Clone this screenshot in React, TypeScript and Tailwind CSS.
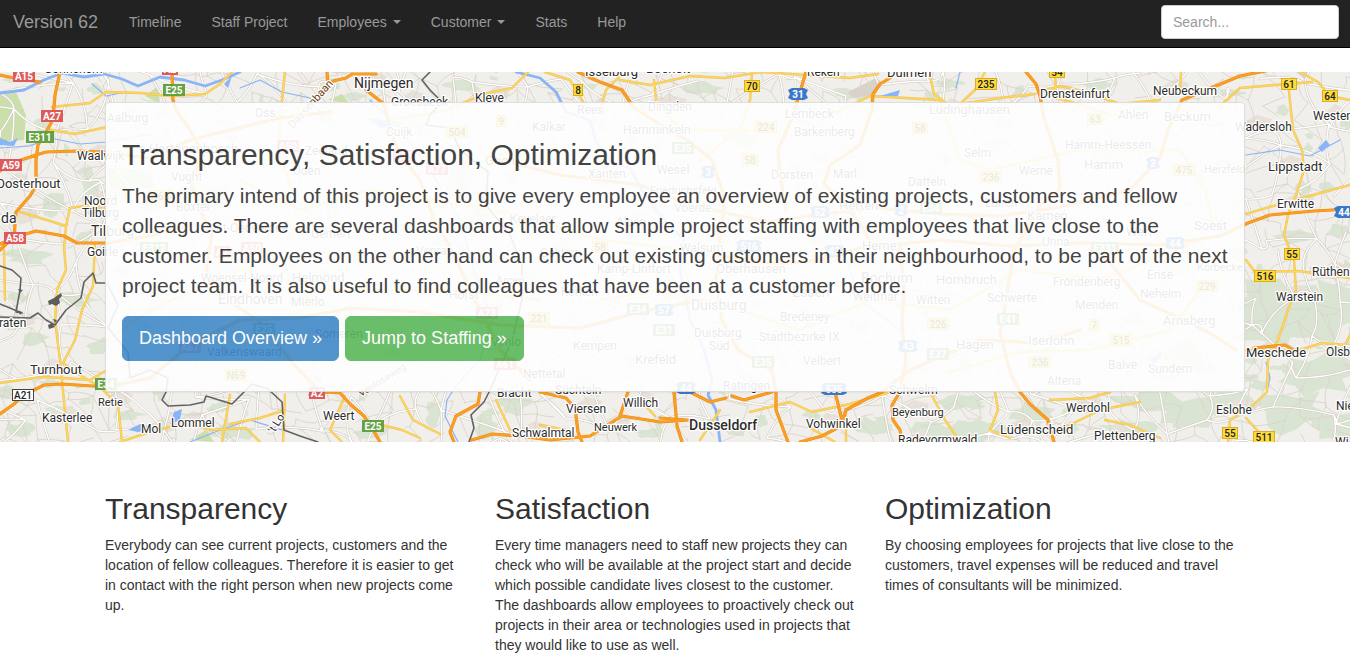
import React from "react";

type Point = [number, number];

/* ---------- map data ---------- */

const MAP = { left: 0, top: 72, width: 1350, height: 370 };

const motorways = [
  "M0 75 L14 78 L40 82",
  "M60 72 L55 95 L53 118 L50 125 L38 145 L36 160 L36 186 L30 196 L16 212 L14 237 L4 246 L0 250",
  "M0 171 L12 163 L36 155 L46 152 L77 151 L100 152 L150 158 L190 140 L230 130 L280 118 L330 112",
  "M0 244 L16 237 L36 231 L64 236 L77 243 L107 243 L150 236 L190 225",
  "M0 414 L14 404 L22 396 L44 385 L62 384 L92 386 L107 387 L150 378 L190 345 L240 320 L300 318 L350 308 L420 312 L500 325 L580 328 L640 312 L700 300",
  "M172 72 L173 100 L176 110 L190 130 L204 155 L190 180 L200 210 L212 235 L206 270 L228 300 L260 322 L290 360 L320 392",
  "M310 395 L328 392 L340 393 L350 404 L364 416 L372 428 L380 442",
  "M327 72 L328 86 L333 81 L346 78 L352 74 L376 74",
  "M366 90 L384 104 L390 130 L400 155 L420 180 L434 220 L452 250 L470 290 L485 320 L500 350 L530 380",
  "M578 72 L600 82 L622 90 L634 108 L660 124 L690 142 L712 160 L722 190 L724 210 L720 235 L716 280 L722 320 L738 350 L772 370 L776 392 L776 410 L788 442",
  "M806 72 L800 92 L792 118 L778 150 L780 175 L786 210",
  "M890 78 L880 84 L873 94 L872 110 L860 145 L830 165 L824 184 L850 210 L870 240",
  "M1026 72 L1036 84 L1040 96 L1044 118 L1058 160 L1060 190 L1040 205 L1014 250 L1006 300 L1000 332 L1010 372 L1020 392 L1030 404 L1048 420 L1054 442",
  "M1270 70 L1240 76 L1182 100 L1168 130 L1160 158 L1130 190 L1060 207 L1000 216 L940 214 L880 208 L820 214 L770 222 L740 216 L690 205 L640 185 L560 175 L500 160",
  "M1350 209 L1314 211 L1270 215 L1248 223 L1220 236 L1160 245 L1080 243 L1010 246 L940 240 L860 248 L820 260 L780 264 L720 256",
  "M900 246 L904 290 L902 325 L906 360 L900 392 L892 405 L893 420 L900 430 L902 442",
  "M1254 348 L1285 345 L1295 351 M1236 350 L1210 333 L1180 318 L1140 300 L1100 250",
  "M800 442 L822 436 L841 426 L846 410 L868 398 L882 392 L910 370 L980 340 L1040 343 L1080 330",
  "M835 392 L842 420",
  "M540 392 L566 398 L575 408 L578 432 L582 442",
  "M480 392 L478 404 L456 416 L450 432 L454 442 M472 440 L492 434 L520 436 L550 440 L590 436 L622 416 L660 422 L689 420",
  "M620 416 L628 392",
  "M660 418 L686 420 M674 392 L677 426 L682 442 M690 392 L710 402 L726 398 M732 396 L744 400 L772 392",
];

const mainRoads = [
  "M52 107 L90 103 L106 92 L140 93 L170 96 L205 94 L220 84 L232 72",
  "M50 130 L75 134 L107 127",
  "M20 212 L50 221 L66 226 L70 208 L90 205 L107 210",
  "M66 226 L64 248 L66 270 L57 290 L55 320 L60 360 L68 442",
  "M95 243 L93 286 L82 310 L75 340 L63 363 L80 375 L100 387 L118 405 L122 442",
  "M0 383 L42 377 L63 378 L90 380 L107 370",
  "M120 442 L150 432 L185 423 L212 430 L246 428 L260 442",
  "M4 250 L5 300 M230 395 L222 442",
  "M230 424 L260 418 L285 410 M345 396 L330 430 L342 442 M285 395 L283 442",
  "M400 396 L413 420 L440 434 M378 424 L402 430 L420 438",
  "M285 72 L282 100 L278 150 L292 190",
  "M390 120 L440 112 L470 100 L492 92 L512 88 L528 72",
  "M545 72 L570 80 L582 100 L595 120 M600 110 L606 90 L620 76",
  "M620 80 L650 85 L690 76 L725 78 L760 72 M752 72 L750 100 L740 130 L700 160",
  "M654 80 L656 100 L680 130 L750 130",
  "M930 76 L934 94 L950 106 M985 72 L975 90 L960 104 L1000 98 L1035 94 M1055 72 L1056 98 L1078 104 L1110 115",
  "M1040 92 L1060 86 L1086 92 L1120 104 L1160 100 M1181 72 L1180 92 M1220 106 L1240 88 L1275 85 L1312 82 M1300 72 L1318 82 L1330 96 L1350 100",
  "M1288 82 L1293 130 L1302 150 L1304 170 L1296 195 L1288 215 L1284 235 L1294 260 L1296 290 L1288 310 L1278 340 L1268 360 L1267 392 L1250 408 L1230 420 L1228 442",
  "M1246 214 L1280 204 L1350 185 M1246 260 L1255 272 L1298 271 L1350 278",
  "M1246 350 L1300 350 L1322 343 L1345 345 L1350 335 M1246 418 L1268 442",
  "M995 392 L998 410 L990 430 L1010 438 M1050 400 L1090 398 L1110 392 M1105 420 L1130 425 L1160 438 M1060 430 L1100 410 L1140 402",
  "M750 412 L790 402 L812 412 L850 404 L890 392 M810 428 L835 442 M846 442 L846 410 M930 392 L945 420 L960 442",
  "M496 400 L510 430 M540 425 L566 430 M640 400 L655 416 M700 440 L720 410 M760 72 L850 78 L878 74",
  "M240 180 L300 210 L370 190 L430 200 L520 215 L600 240 L690 250",
  "M600 300 L660 290 L740 310 L800 330 L870 300 L950 310 L1020 270 L1100 280 L1200 240",
  "M820 120 L870 96 L940 100 L960 160 L990 170 L1080 150 L1180 150 L1205 190 L1215 230",
  "M107 340 L150 310 L240 270 L330 290 L450 290 L540 300",
  "M950 372 L1020 352 L1090 350 L1170 330 L1200 290",
];

const rivers = [
  "M0 93 L24 90 L44 80 L62 73 L84 77 L104 74 L122 79 L138 86 L160 77 L184 80 L205 86 L222 80 L240 72",
  "M516 72 L540 78 L556 92 L566 112 L590 120 L596 142 L614 164 L630 168 L642 190 L660 215 L684 240 L680 270 L690 320 L704 350 L712 380 L708 395 L716 410 L720 442",
];

const streams = [
  "M0 148 L30 146 L50 138 L80 144 L107 142 L150 134",
  "M92 84 L106 96 L126 92",
  "M458 442 L445 416 L447 400 L456 386 L480 360 L492 320 L474 270 L460 220 L430 170 L400 128 L370 100",
  "M1266 362 L1270 378 L1267 390",
  "M1246 155 L1280 150 L1310 156 L1340 140",
  "M190 442 L220 430 L250 420 L282 430",
  "M960 72 L956 88 M830 190 L840 240 L860 300 L900 330",
  "M240 88 L260 80 L282 92 L310 98 L320 112",
];

const borders = [
  "M0 266 L12 270 L21 278 L20 290 L16 312 L22 313 L0 304 M0 317 L30 318 L38 313 L46 320 L55 325 L66 310 L81 298 L84 282 L93 273 L96 283 L107 283 L118 305 L108 328 L128 352 L130 378 L150 370 L168 378 L166 392 L162 400 L168 406 L190 405 L204 402 L206 396 L232 404 L252 384 L268 389 L282 402 L284 430 L300 436 L318 442",
  "M430 72 L422 80 L430 90 L442 102 L430 115 L426 125 L450 128 L460 150 L488 172 L486 205 L510 235 L522 265 L522 300 L512 340 L490 390 L484 402 L471 415 L474 428 L469 442",
];

const greens = [
  "M0 92 L16 92 L26 115 L24 140 L0 142 Z",
  "M190 440 L206 430 L214 442 Z",
  "M107 168 L150 170 L155 188 L110 190 Z",
  "M145 96 L158 86 L160 104 Z",
  "M328 100 L342 94 L350 104 Z",
];

const forests: [number, number, number, number][] = [
  [28, 258, 26, 9], [90, 190, 10, 22], [54, 205, 14, 12], [86, 236, 12, 8], [76, 300, 22, 8],
  [34, 340, 16, 7], [100, 346, 14, 9], [60, 410, 20, 6], [20, 430, 18, 7], [130, 415, 16, 6],
  [230, 432, 26, 9], [330, 84, 10, 8], [352, 96, 14, 6], [462, 86, 18, 6], [374, 432, 20, 8],
  [486, 424, 12, 14], [513, 404, 18, 10], [434, 414, 9, 13], [700, 88, 24, 7], [650, 108, 20, 6],
  [850, 94, 20, 7], [950, 84, 14, 6], [1020, 92, 10, 6], [1100, 84, 16, 6], [1230, 92, 16, 4],
  [1296, 236, 22, 8], [1340, 230, 12, 7], [1262, 304, 26, 30], [1304, 318, 54, 34], [1336, 302, 26, 26],
  [1268, 334, 34, 14], [1316, 374, 46, 20], [1290, 412, 44, 24], [1334, 426, 26, 18], [1226, 404, 28, 14],
  [1190, 414, 30, 18], [1150, 402, 38, 12], [1126, 430, 34, 12], [1032, 414, 26, 12], [974, 430, 30, 14],
  [962, 402, 26, 9], [870, 426, 24, 9], [930, 430, 22, 10], [736, 430, 12, 7], [650, 434, 18, 6],
  [200, 196, 40, 14], [458, 180, 14, 24], [480, 220, 18, 14], [740, 140, 20, 10], [1180, 360, 40, 20],
];

const lakes = [
  "M0 138 L10 142 L18 138 L14 146 L0 145 Z",
  "M1318 148 L1326 140 L1330 145 L1322 152 Z",
  "M1150 360 L1160 352 L1162 356 L1154 364 Z",
  "M174 412 L182 409 L180 420 L170 424 Z",
  "M224 84 L232 76 L228 88 Z",
  "M880 96 L900 90 L898 96 Z",
  "M128 430 L140 424 L156 428 L138 432 Z",
  "M368 118 L384 120 L396 126 L380 128 Z",
];

const places: [number, number, number, string][] = [
  [354, 88, 14, "Nijmegen"], [391, 106, 12, "Groesbeek"], [475, 102, 12, "Kleve"], [585, 76, 13, "Isselburg"],
  [646, 73, 13, "Bocholt"], [807, 76, 12, "Reken"], [887, 77, 13, "Dülmen"], [1040, 98, 12, "Drensteinfurt"],
  [1153, 95, 12, "Neubeckum"], [1313, 120, 12, "Westen"], [1235, 131, 12, "Wadersloh"], [1268, 171, 13, "Lippstadt"],
  [1277, 208, 12, "Erwitte"], [1312, 276, 12, "Rüthen"], [1276, 301, 12, "Warstein"], [1246, 357, 13, "Meschede"],
  [1326, 356, 12, "Olsb"], [1216, 414, 12, "Eslohe"], [1336, 410, 12, "Nie"], [1335, 446, 12, "Wi"],
  [1066, 412, 12, "Werdohl"], [1000, 434, 13, "Lüdenscheid"], [1094, 440, 12, "Plettenberg"], [892, 416, 11, "Beyenburg"],
  [898, 444, 12, "Radevormwald"], [806, 428, 12, "Vohwinkel"], [623, 407, 12, "Willich"], [566, 413, 12, "Viersen"],
  [594, 431, 11, "Neuwerk"], [512, 437, 12, "Schwalmtal"], [497, 397, 12, "Bracht"], [555, 394, 12, "Süchteln"],
  [889, 394, 12, "Schwelm"], [323, 420, 12, "Weert"], [171, 427, 12, "Lommel"], [141, 433, 12, "Mol"],
  [42, 422, 12, "Kasterlee"], [98, 406, 11, "Retie"], [30, 374, 13, "Turnhout"], [-1, 327, 12, "raten"],
  [87, 256, 12, "Goirle"], [91, 236, 14, "Tilburg"], [84, 205, 12, "Noord"], [82, 217, 12, "Tilburg"],
  [1, 223, 14, "da"], [-4, 188, 13, "Oosterhout"], [77, 160, 12, "Waalwijk"], [44, 73, 12, "Gorinchem"],
  [107, 122, 12, "Aalburg"], [137, 153, 13, "'s-Hertogenbosch"], [171, 181, 12, "Vught"], [176, 211, 12, "Boxtel"],
  [206, 232, 12, "Sint-Oedenrode"], [255, 117, 12, "Oss"], [305, 155, 12, "Zeeland"], [293, 175, 12, "Uden"],
  [386, 136, 12, "Cuijk"], [485, 165, 13, "Goch"], [532, 131, 12, "Kalkar"], [577, 114, 12, "Rees"],
  [648, 111, 12, "Dingden"], [623, 134, 12, "Hamminkeln"], [588, 178, 12, "Xanten"], [657, 174, 12, "Wesel"],
  [650, 194, 11, "Friedrichsfeld"], [674, 212, 12, "Voerde"], [510, 223, 12, "Kevelaer"], [616, 226, 12, "Alpen"],
  [311, 238, 12, "Gemert"], [416, 255, 12, "Venray"], [540, 257, 12, "Geldern"], [597, 273, 12, "Kamp-Lintfort"],
  [292, 282, 13, "Helmond"], [201, 282, 12, "Woensel-Noord"], [218, 304, 14, "Eindhoven"], [291, 306, 12, "Mierlo"],
  [496, 284, 11, "Arcen"], [449, 299, 12, "Horst"], [561, 296, 12, "Kerken"], [315, 338, 12, "Someren"],
  [207, 356, 12, "Valkenswaard"], [491, 346, 12, "Venlo"], [573, 350, 12, "Kempen"], [635, 364, 13, "Krefeld"],
  [523, 378, 12, "Nettetal"], [691, 310, 14, "Duisburg"], [694, 337, 12, "Duisburg"], [709, 350, 12, "Süd"],
  [723, 390, 12, "Ratingen"], [803, 365, 12, "Velbert"], [759, 341, 12, "Stadtbezirke IX"], [780, 321, 12, "Bredeney"],
  [792, 297, 14, "Essen"], [853, 301, 12, "Weitmar"], [916, 304, 12, "Witten"], [956, 349, 13, "Hagen"],
  [1028, 345, 13, "Iserlohn"], [987, 302, 12, "Schwerte"], [1075, 309, 12, "Menden"], [1047, 385, 12, "Altena"],
  [1108, 369, 12, "Balve"], [1148, 373, 12, "Sundern"], [1163, 325, 13, "Arnsberg"], [1140, 298, 12, "Neheim"],
  [1147, 279, 12, "Ense"], [1197, 271, 11, "Körbecke"], [1194, 230, 13, "Soest"], [1126, 236, 13, "Werl"],
  [1042, 246, 12, "Unna"], [1027, 220, 13, "Kamen"], [985, 207, 12, "Lünen"], [839, 210, 13, "Herten"],
  [771, 179, 12, "Dorsten"], [833, 178, 12, "Marl"], [908, 186, 12, "Datteln"], [964, 157, 12, "Selm"],
  [1019, 175, 12, "Werne"], [1084, 169, 13, "Hamm"], [1065, 149, 12, "Hamm-Heessen"], [1118, 119, 12, "Ahlen"],
  [1164, 121, 13, "Beckum"], [929, 114, 13, "Lüdinghausen"], [794, 136, 12, "Barkenberg"], [785, 118, 12, "Lembeck"],
  [1204, 173, 11, "Herzfeld"], [1053, 286, 12, "Fröndenberg"], [936, 284, 13, "Hombruch"], [861, 283, 14, "Bochum"],
  [862, 250, 13, "Herne"], [716, 273, 13, "Oberhausen"], [680, 252, 12, "Walsum"],
];

type ShieldKind = "red" | "green" | "yellow" | "blue" | "white";

const shields: [number, number, string, ShieldKind][] = [
  [24, 76, "A15", "red"], [52, 116, "A27", "red"], [11, 165, "A59", "red"], [15, 238, "A58", "red"],
  [170, 69, "A2", "red"], [317, 393, "A2", "red"], [174, 90, "E25", "green"], [40, 137, "E311", "green"],
  [106, 384, "E34", "green"], [373, 426, "E25", "green"], [23, 395, "A21", "white"], [578, 90, "8", "yellow"],
  [752, 86, "70", "yellow"], [986, 84, "235", "yellow"], [1057, 72, "54", "yellow"], [1289, 84, "61", "yellow"],
  [1330, 96, "64", "yellow"], [1292, 254, "55", "yellow"], [1265, 276, "516", "yellow"], [1230, 433, "55", "yellow"],
  [1264, 437, "511", "yellow"], [798, 94, "31", "blue"], [1344, 212, "44", "blue"], [834, 389, "535", "blue"],
  [686, 388, "44", "blue"], [501, 121, "9", "yellow"], [457, 132, "504", "yellow"], [288, 146, "A50", "red"],
  [252, 248, "A50", "red"], [437, 169, "A77", "red"], [404, 156, "A73", "red"], [487, 313, "A73", "red"],
  [505, 364, "A61", "red"], [190, 347, "A67", "red"], [264, 329, "E25", "green"], [236, 375, "N69", "yellow"],
  [539, 318, "221", "yellow"], [600, 247, "58", "yellow"], [683, 148, "E35", "green"], [638, 309, "E34", "green"],
  [664, 330, "E31", "green"], [664, 310, "57", "blue"], [766, 127, "224", "yellow"], [750, 160, "58", "yellow"],
  [708, 172, "3", "blue"], [820, 212, "52", "blue"], [901, 210, "2", "blue"], [931, 208, "E34", "green"],
  [749, 246, "516", "blue"], [834, 251, "42", "blue"], [920, 128, "58", "yellow"], [991, 177, "236", "yellow"],
  [1095, 119, "63", "yellow"], [1153, 163, "2", "blue"], [1184, 170, "475", "yellow"], [1175, 243, "44", "blue"],
  [1105, 248, "E331", "green"], [1207, 286, "229", "yellow"], [1121, 340, "515", "yellow"], [1094, 325, "7", "yellow"],
  [1008, 319, "E41", "green"], [938, 324, "226", "yellow"], [908, 346, "43", "blue"], [938, 354, "E37", "green"],
  [1040, 362, "236", "yellow"], [763, 362, "E35", "green"], [154, 248, "E312", "green"], [222, 252, "A2", "red"],
  [160, 196, "N65", "yellow"],
];

const shieldColors: Record<ShieldKind, { fill: string; stroke: string; text: string }> = {
  red: { fill: "#dc5a5c", stroke: "#dc5a5c", text: "#ffffff" },
  green: { fill: "#65a142", stroke: "#65a142", text: "#ffffff" },
  yellow: { fill: "#fddb3c", stroke: "#dcae1e", text: "#222222" },
  blue: { fill: "#3c78c8", stroke: "#3c78c8", text: "#ffffff" },
  white: { fill: "#ffffff", stroke: "#444444", text: "#222222" },
};

/* ---------- local road network ---------- */

function createRandom(seed: number) {
  let state = seed;
  return () => {
    state = (state * 1664525 + 1013904223) % 4294967296;
    return state / 4294967296;
  };
}

function buildNetwork(step: number, seed: number, density: number) {
  const random = createRandom(seed);
  const cols = Math.ceil(MAP.width / step) + 2;
  const rows = Math.ceil(MAP.height / step) + 2;
  const nodes: Point[][] = [];
  for (let r = 0; r < rows; r++) {
    nodes.push([]);
    for (let c = 0; c < cols; c++) {
      nodes[r].push([
        Math.round((c - 0.5 + (random() - 0.5) * 1.1) * step),
        Math.round(MAP.top + (r - 0.5 + (random() - 0.5) * 1.1) * step),
      ]);
    }
  }
  let d = "";
  const link = (a: Point, b: Point) => {
    const mx = Math.round((a[0] + b[0]) / 2 + (random() - 0.5) * step * 0.5);
    const my = Math.round((a[1] + b[1]) / 2 + (random() - 0.5) * step * 0.5);
    d += `M${a[0]} ${a[1]}Q${mx} ${my} ${b[0]} ${b[1]}`;
  };
  for (let r = 0; r < rows - 1; r++) {
    for (let c = 0; c < cols - 1; c++) {
      if (random() < density) link(nodes[r][c], nodes[r][c + 1]);
      if (random() < density) link(nodes[r][c], nodes[r + 1][c]);
      if (random() < density * 0.35) link(nodes[r][c], nodes[r + 1][c + 1]);
    }
  }
  return d;
}

function buildPatches(seed: number) {
  const random = createRandom(seed);
  const blob = (cx: number, cy: number, rx: number, ry: number) => {
    const points: string[] = [];
    for (let i = 0; i < 14; i++) {
      const angle = (i / 14) * Math.PI * 2;
      const k = 0.5 + random() * 0.7;
      points.push(`${Math.round(cx + Math.cos(angle) * rx * k)} ${Math.round(cy + Math.sin(angle) * ry * k)}`);
    }
    return `M${points.join("L")}Z`;
  };
  let d = forests.map(([x, y, rx, ry]) => blob(x, y, rx, ry)).join("");
  for (let i = 0; i < 170; i++) {
    d += blob(random() * MAP.width, MAP.top + random() * MAP.height, 3 + random() * 8, 2 + random() * 6);
  }
  return d;
}

function buildTowns() {
  const random = createRandom(77);
  return places
    .map(([x, y]) => {
      const cx = x + 22;
      const cy = y - 8;
      const w = 9 + Math.round(random() * 8);
      return `M${cx - w} ${cy}l${w} -8l${w} 4l-3 9l-${w} 5Z`;
    })
    .join("");
}

const lanes = buildNetwork(17, 11, 0.5);
const localRoads = buildNetwork(36, 5, 0.62);
const patches = buildPatches(42);
const towns = buildTowns();

function Shield({ x, y, label, kind }: { x: number; y: number; label: string; kind: ShieldKind }) {
  const colors = shieldColors[kind];
  const w = label.length * 6 + (kind === "blue" ? 6 : 4);
  const half = Math.round(w / 2);
  return (
    <g>
      {kind === "blue" ? (
        <path
          d={`M${x - half + 3} ${y - 6}H${x + half - 3}L${x + half + 1} ${y - 4}L${x + half - 1} ${y}L${x + half + 1} ${y + 4}L${x + half - 3} ${y + 6}H${x - half + 3}L${x - half - 1} ${y + 4}L${x - half + 1} ${y}L${x - half - 1} ${y - 4}Z`}
          fill={colors.fill}
        />
      ) : (
        <rect x={x - half + 0.5} y={y - 5.5} width={w - 1} height={11} fill={colors.fill} stroke={colors.stroke} />
      )}
      <text
        x={x}
        y={y + 4}
        textAnchor="middle"
        fontSize={10}
        fontWeight={kind === "yellow" || kind === "white" ? 500 : 700}
        fill={colors.text}
      >
        {label}
      </text>
    </g>
  );
}

function RegionMap() {
  return (
    <svg
      aria-hidden="true"
      viewBox="0 72 1350 370"
      preserveAspectRatio="xMidYMid slice"
      className="absolute inset-0 h-full w-full font-[Roboto,sans-serif]"
    >
      <rect x={-400} y={0} width={2200} height={600} fill="#f1efeb" />
      <path d={patches} fill="#dae4d3" />
      <path d={greens.join("")} fill="#cadfaa" />
      <path d={towns} fill="#e7e1da" />
      <path d="M1296 72L1310 72L1306 80ZM848 92L876 78L884 84L870 96L852 98Z" fill="#d9d2c9" />
      <g fill="none" strokeLinejoin="round" strokeLinecap="round">
        <path d={lanes} stroke="#dad5ca" strokeWidth={0.9} />
        <path d={localRoads} stroke="#cdc7bb" strokeWidth={2.4} />
        <path d={localRoads} stroke="#ffffff" strokeWidth={1.4} />
        <path d={streams.join("")} stroke="#8ab4f8" strokeWidth={1.2} />
        <path d={rivers.join("")} stroke="#8ab4f8" strokeWidth={2.8} />
        <path d={mainRoads.join("")} stroke="#ecc25a" strokeWidth={2.4} />
        <path d={mainRoads.join("")} stroke="#fdd45c" strokeWidth={1.6} />
        <path d={motorways.join("")} stroke="#ee8d12" strokeWidth={3.2} />
        <path d={motorways.join("")} stroke="#fa9e25" strokeWidth={2.2} />
        <path d={borders.join("")} stroke="#626262" strokeWidth={1.6} />
      </g>
      <path d={lakes.join("")} fill="#8ab4f8" />
      <path
        d="M48 301L54 298L58 295L61 293L62 296L59 299L60 303L56 306L52 304L49 305ZM48 325L52 323L55 327L49 329ZM53 319L57 320L55 323ZM18 311L22 312L20 315ZM18 289L23 290L20 293Z"
        fill="#5c5c5c"
      />
      <g fill="#2c2c2c" stroke="#ffffff" strokeWidth={2.4} strokeLinejoin="round" paintOrder="stroke">
        {places.map(([x, y, size, name]) => (
          <text key={`${name}-${x}-${y}`} x={x} y={y} fontSize={size}>
            {name}
          </text>
        ))}
        <text x={689} y={430} fontSize={14} fontWeight={500}>
          Dusseldorf
        </text>
        <text transform="translate(274 434) rotate(-58)" fontSize={11}>
          't Lo
        </text>
        <g fill="#6b3d10">
          <text transform="translate(293 129) rotate(-48)" fontSize={11}>
            Dassenbaan
          </text>
          <text transform="translate(361 397) rotate(-32)" fontSize={10}>
            Venloseweg
          </text>
        </g>
      </g>
      {shields.map(([x, y, label, kind]) => (
        <Shield key={`${label}-${x}-${y}`} x={x} y={y} label={label} kind={kind} />
      ))}
    </svg>
  );
}

/* ---------- page ---------- */

const navItems = [
  { label: "Timeline", menu: false },
  { label: "Staff Project", menu: false },
  { label: "Employees", menu: true },
  { label: "Customer", menu: true },
  { label: "Stats", menu: false },
  { label: "Help", menu: false },
];

function NavBar() {
  return (
    <header className="flex h-12 items-start border-b border-black bg-[#222222] pr-[11px] pl-[13px] text-[#999999]">
      <a href="#home" className="py-3 pr-4 text-lg leading-5 whitespace-nowrap hover:text-white">
        Version 62
      </a>
      <nav>
        <ul className="flex">
          {navItems.map((item) => (
            <li key={item.label}>
              {item.menu ? (
                <button
                  type="button"
                  aria-haspopup="menu"
                  className="flex items-center gap-1.5 px-[15px] py-3 text-sm leading-5 hover:text-white"
                >
                  {item.label}
                  <span className="border-x-4 border-t-4 border-x-transparent border-t-current" />
                </button>
              ) : (
                <a href="#section" className="block px-[15px] py-3 text-sm leading-5 whitespace-nowrap hover:text-white">
                  {item.label}
                </a>
              )}
            </li>
          ))}
        </ul>
      </nav>
      <form className="mt-[5px] ml-auto" onSubmit={(event) => event.preventDefault()}>
        <input
          type="text"
          aria-label="Search"
          placeholder="Search..."
          className="h-[34px] w-[178px] rounded border border-[#cccccc] bg-white px-[11px] text-sm text-[#555555] placeholder:text-[#999999]"
        />
      </form>
    </header>
  );
}

function Hero() {
  return (
    <section className="relative mt-6 overflow-hidden pt-[30px] pb-[50px]">
      <RegionMap />
      <div className="relative mx-auto max-w-[1170px] px-[15px]">
        <div className="rounded border border-[#dddddd] bg-white px-4 pt-[35px] pb-[30px] opacity-90 shadow-xs">
          <h2 className="mb-2.5 text-[30px] leading-[33px]">Transparency, Satisfaction, Optimization</h2>
          <p className="mb-[15px] text-[21px] leading-[30px]">
            The primary intend of this project is to give every employee an overview of existing projects, customers and
            fellow colleagues. There are several dashboards that allow simple project staffing with employees that live
            close to the customer. Employees on the other hand can check out existing customers in their neighbourhood,
            to be part of the next project team. It is also useful to find colleagues that have been at a customer
            before.
          </p>
          <div className="flex flex-wrap gap-1.5">
            <a
              href="#dashboard"
              className="rounded-md border border-[#428bca] bg-[#428bca] px-4 py-2.5 text-lg leading-[23px] text-white"
            >
              Dashboard Overview »
            </a>
            <a
              href="#staffing"
              className="rounded-md border border-[#5cb85c] bg-[#5cb85c] px-4 py-2.5 text-lg leading-[23px] text-white"
            >
              Jump to Staffing »
            </a>
          </div>
        </div>
      </div>
    </section>
  );
}

const features = [
  {
    title: "Transparency",
    text: "Everybody can see current projects, customers and the location of fellow colleagues. Therefore it is easier to get in contact with the right person when new projects come up.",
  },
  {
    title: "Satisfaction",
    text: "Every time managers need to staff new projects they can check who will be available at the project start and decide which possible candidate lives closest to the customer. The dashboards allow employees to proactively check out projects in their area or technologies used in projects that they would like to use as well.",
  },
  {
    title: "Optimization",
    text: "By choosing employees for projects that live close to the customers, travel expenses will be reduced and travel times of consultants will be minimized.",
  },
];

export default function App() {
  return (
    <div className="bg-white font-['Liberation_Sans',Arial,sans-serif] text-[#333333]">
      <NavBar />
      <main>
        <Hero />
        <div className="mx-auto grid max-w-[1170px] grid-cols-3 pt-[50px]">
          {features.map((feature) => (
            <section key={feature.title} className="px-[15px]">
              <h2 className="mb-2.5 text-[30px] leading-[33px]">{feature.title}</h2>
              <p className="text-sm leading-5">{feature.text}</p>
            </section>
          ))}
        </div>
      </main>
    </div>
  );
}
